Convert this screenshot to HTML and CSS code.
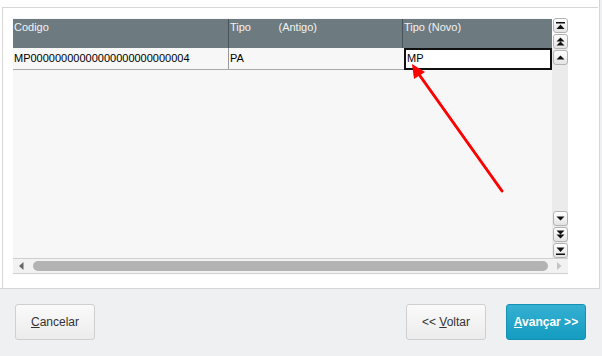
FILE: index.html
```html
<!DOCTYPE html>
<html lang="pt-BR">
<head>
    <meta charset="UTF-8">
    <meta name="viewport" content="width=device-width, initial-scale=1.0">
    <title>Alterar tipo</title>
    <link rel="stylesheet" href="styles.css">
</head>
<body>
    <div class="painel">
        <div class="moldura">
            <div class="grade">
                <div class="tabela">
                    <div class="linha cabecalho">
                        <div class="col col1">Codigo</div>
                        <div class="col col2">Tipo         (Antigo)</div>
                        <div class="col col3">Tipo (Novo)</div>
                    </div>
                    <div class="linha dados">
                        <div class="col col1">MP00000000000000000000000004</div>
                        <div class="col col2">PA</div>
                        <div class="col col3 editando">MP</div>
                    </div>
                </div>
                <div class="rolagem-v">
                    <div class="grupo">
                        <span class="btn-r"><svg width="9" height="8" viewBox="0 0 9 8"><rect x="0" y="0" width="9" height="1.5" fill="#111"/><path d="M4.5 2.5 L8.5 7 L0.5 7 Z" fill="#111"/></svg></span>
                        <span class="btn-r"><svg width="9" height="9" viewBox="0 0 9 9"><path d="M4.5 0.5 L8.5 4.5 L0.5 4.5 Z M4.5 4.5 L8.5 8.5 L0.5 8.5 Z" fill="#111"/></svg></span>
                        <span class="btn-r"><svg width="9" height="5" viewBox="0 0 9 5"><path d="M4.5 0.5 L8.5 4.5 L0.5 4.5 Z" fill="#111"/></svg></span>
                    </div>
                    <div class="grupo">
                        <span class="btn-r"><svg width="9" height="5" viewBox="0 0 9 5"><path d="M0.5 0.5 L8.5 0.5 L4.5 4.5 Z" fill="#111"/></svg></span>
                        <span class="btn-r"><svg width="9" height="9" viewBox="0 0 9 9"><path d="M0.5 0.5 L8.5 0.5 L4.5 4.5 Z M0.5 4.5 L8.5 4.5 L4.5 8.5 Z" fill="#111"/></svg></span>
                        <span class="btn-r"><svg width="9" height="8" viewBox="0 0 9 8"><path d="M0.5 0.5 L8.5 0.5 L4.5 5 Z" fill="#111"/><rect x="0" y="6.5" width="9" height="1.5" fill="#111"/></svg></span>
                    </div>
                </div>
            </div>
            <div class="rolagem-h">
                <svg class="seta-h" width="5" height="8" viewBox="0 0 5 8"><path d="M4.5 0 L4.5 8 L0 4 Z" fill="#666"/></svg>
                <div class="polegar"></div>
                <svg class="seta-h" width="5" height="8" viewBox="0 0 5 8"><path d="M0 0 L0 8 L4.5 4 Z" fill="#c4c4c4"/></svg>
            </div>
        </div>
    </div>

    <div class="rodape">
        <button class="botao"><u>C</u>ancelar</button>
        <div class="direita">
            <button class="botao">&lt;&lt; <u>V</u>oltar</button>
            <button class="botao primario"><u>A</u>vançar &gt;&gt;</button>
        </div>
    </div>

    <!-- seta vermelha apontando para a celula editada -->
    <svg class="marcador" width="602" height="356" viewBox="0 0 602 356">
        <line x1="502" y1="191" x2="418" y2="73" stroke="#ff0000" stroke-width="3" stroke-linecap="round"/>
        <path d="M412 64 L425 72 L414 79 Z" fill="#ff0000"/>
    </svg>
</body>
</html>
```

FILE: styles.css
```css
body{
    margin: 0;
    width: 602px;
    height: 356px;
    background: #eff0f1;
    font-family: "Liberation Sans", Arial, sans-serif;
    position: relative;
    overflow: hidden;
}
.painel{
    box-sizing: border-box;
    width: 600px;
    height: 289px;
    padding: 7px 0 0 2px;
    background: #fff;
    border-right: 1px solid #d6d6d6;
    border-bottom: 1px solid #d6d6d6;
}
.moldura{
    width: 585px;
    height: 270px;
    border-top: 1px solid #d6d6d6;
    border-left: 1px solid #d6d6d6;
    padding: 10px 0 0 10px;
}
.grade{
    display: flex;
    height: 240px;
    width: 555px;
}
.tabela{
    width: 539px;
    background: #f7f7f7;
}
.linha{
    display: flex;
}
.cabecalho{
    height: 29px;
    margin-top: 1px;
    background: #6d7b80;
    color: #f2f2f2;
}
.col{
    font-size: 11px;
    line-height: 13px;
    white-space: pre;
    padding-left: 1px;
    box-sizing: border-box;
}
.cabecalho .col{
    padding-top: 2px;
    border-right: 1px solid #49545a;
}
.col1{ width: 216px; }
.col2{ width: 174px; }
.col3{ width: 149px; }
.cabecalho .col3{ border-right: none; }
.dados{
    height: 22px;
    background: #f7f7f7;
    border-bottom: 1px solid #a8a8a8;
    box-sizing: border-box;
    color: #000;
}
.dados .col{
    padding-top: 4px;
}
.dados .col1{
    border-right: 1px solid #9a9a9a;
}
.dados .editando{
    background: #fff;
    border: 2px solid #111;
    padding-top: 2px;
    margin-left: 1px;
    width: 148px;
    height: 22px;
}
.rolagem-v{
    width: 16px;
    display: flex;
    flex-direction: column;
    justify-content: space-between;
    background: linear-gradient(#fff 30px, #ebebeb 30px);
}
.grupo{
    display: flex;
    flex-direction: column;
    gap: 1px;
    padding-left: 1px;
}
.btn-r{
    width: 15px;
    height: 15px;
    box-sizing: border-box;
    border: 1px solid #b3b3b3;
    border-radius: 3px;
    background: linear-gradient(#ffffff, #e4e4e4);
    display: flex;
    align-items: center;
    justify-content: center;
}
.rolagem-h{
    width: 555px;
    height: 16px;
    border-top: 1px solid #cfcfcf;
    border-bottom: 1px solid #cfcfcf;
    background: #f2f2f2;
    display: flex;
    align-items: center;
    padding: 0 6px;
    box-sizing: border-box;
}
.polegar{
    flex: 1;
    height: 10px;
    border-radius: 5px;
    background: #b3b3b3;
    margin: 0 9px;
}
.rodape{
    display: flex;
    justify-content: space-between;
    padding: 15px 16px 0 15px;
}
.direita{
    display: flex;
    gap: 20px;
}
.botao{
    width: 80px;
    height: 36px;
    border: 1px solid #cfcfcf;
    border-radius: 3px;
    background: linear-gradient(#fafafa, #ececec);
    font-family: "Liberation Sans", Arial, sans-serif;
    font-size: 12px;
    color: #333;
    padding: 0;
}
.primario{
    background: linear-gradient(#35b0d2, #149cc1);
    border-color: #1590b2;
    color: #fff;
    font-weight: bold;
}
.marcador{
    position: absolute;
    left: 0;
    top: 0;
    pointer-events: none;
}
```
